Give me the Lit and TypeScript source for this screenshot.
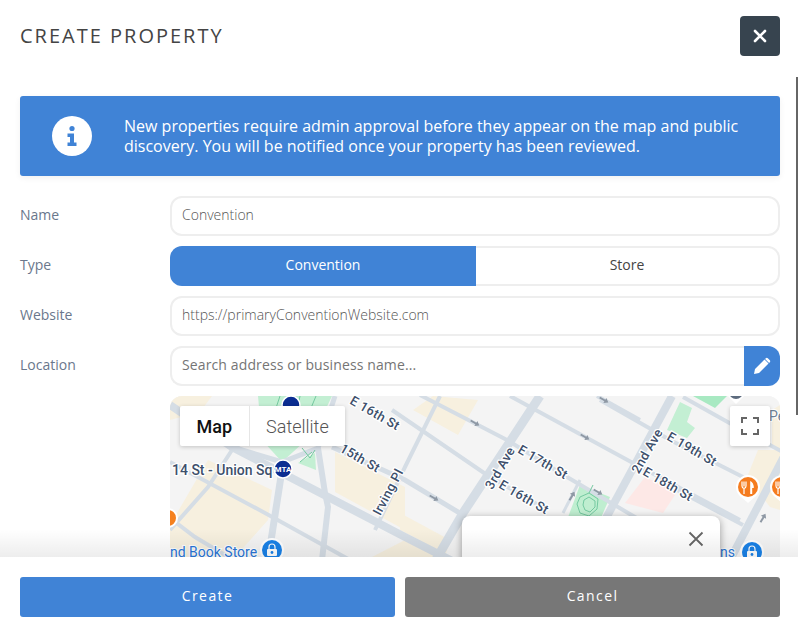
import { LitElement, css, html, svg } from "lit";
import { customElement } from "lit/decorators.js";

const road = "#d5dde5";
const mapText = "#3d4f6b";
const blue = "#4083d6";

// polylines in page coordinates: [points, width]
const roads: [string, number][] = [
  ["170,405 232,447 405,537 470,570", 8],
  ["170,462 265,513 350,560", 4],
  ["170,518 195,537 250,570", 4],
  ["170,530 208,487 232,450", 4],
  ["282,470 268,560", 7],
  ["318,448 325,493 328,507 322,560", 6],
  ["232,447 282,462 318,448 335,396", 5],
  ["332,447 405,480 463,515", 5],
  ["420,395 507,440 567,477 640,520", 4],
  ["392,410 487,475 547,510", 4],
  ["510,396 633,463 740,520", 4],
  ["597,396 640,420", 4],
  ["440,396 405,467 375,530", 4],
  ["540,396 463,513 430,570", 9],
  ["672,396 605,520", 8],
  ["580,480 563,513", 3],
  ["790,445 730,560", 8],
  ["683,397 733,425 790,456", 4],
  ["600,400 670,440 743,477", 4],
  ["677,490 743,525", 4],
];

const beige: string[] = [
  "170,396 212,396 200,412 170,420",
  "208,460 272,490 268,520 235,557 170,557 170,525",
  "335,452 405,487 405,530 335,492",
  "372,557 405,540 450,540 445,557",
  "400,513 450,540 445,553 400,530",
  "413,410 433,396 478,400 458,435",
  "747,477 758,450 780,450 780,510 770,507",
  "772,410 780,405 780,450 772,448",
];

const labels: [string, number, number, number][] = [
  ["E 16th St", 375, 413, 30],
  ["15th St", 360, 458, 30],
  ["Irving Pl", 388, 492, -62],
  ["3rd Ave", 500, 468, -60],
  ["E 17th St", 543, 462, 30],
  ["E 16th St", 524, 497, 30],
  ["2nd Ave", 647, 451, -60],
  ["E 19th St", 692, 449, 30],
  ["E 18th St", 668, 484, 30],
];

const arrows: [number, number, number][] = [
  [475, 423, 30],
  [434, 498, 30],
  [585, 437, 30],
  [604, 400, 30],
  [598, 492, 30],
  [572, 496, -60],
  [763, 518, -60],
];

@customElement("app-root")
export class AppRoot extends LitElement {
  static styles = css`
    :host {
      display: block;
      width: 798px;
      height: 635px;
      overflow: hidden;
      background: #fff;
      font-family: "Open Sans", sans-serif;
    }

    .modal {
      position: relative;
      display: flex;
      flex-direction: column;
      height: 635px;
    }

    .scroller {
      position: relative;
      flex: none;
      height: 557px;
      overflow: hidden;
    }

    .body {
      display: flex;
      flex-direction: column;
      padding: 16px 18px 0 20px;
    }

    .thumb {
      position: absolute;
      right: 0;
      top: 77px;
      width: 2px;
      height: 338px;
      background: #666;
    }

    .fade {
      position: absolute;
      left: 0;
      right: 0;
      bottom: 0;
      height: 28px;
      background: linear-gradient(rgba(0, 0, 0, 0), rgba(0, 0, 0, 0.07));
    }

    .header {
      display: flex;
      justify-content: space-between;
      align-items: center;
      height: 40px;
      margin-bottom: 40px;
    }

    h1 {
      margin: 0;
      padding-bottom: 2px;
      font-size: 20px;
      font-weight: 400;
      letter-spacing: 2px;
      color: #444;
    }

    .close {
      display: flex;
      align-items: center;
      justify-content: center;
      width: 40px;
      height: 40px;
      border: 0;
      padding: 0;
      border-radius: 4px;
      background: #37444f;
    }

    .banner {
      display: flex;
      align-items: center;
      gap: 32px;
      height: 80px;
      margin-bottom: 20px;
      padding-left: 32px;
      box-sizing: border-box;
      border-radius: 3px;
      background: #4083d6;
      color: #fff;
      font-size: 16px;
      line-height: 20px;
      box-shadow: 0 2px 6px rgba(0, 0, 0, 0.06);
    }

    .banner p {
      margin: 0;
      width: 640px;
    }

    .rows {
      display: grid;
      grid-template-columns: 150px 1fr;
      grid-auto-rows: 40px;
      row-gap: 10px;
      align-items: center;
    }

    label {
      padding-bottom: 4px;
      font-size: 14px;
      color: #6a778c;
    }

    .input {
      display: flex;
      align-items: center;
      height: 40px;
      box-sizing: border-box;
      padding: 0 10px 4px;
      border: 2px solid #eee;
      border-radius: 12px;
      font-size: 14px;
      font-weight: 300;
      color: #555;
    }

    .search {
      display: flex;
    }

    .search .input {
      flex: 1;
      border-right: 0;
      border-radius: 12px 0 0 12px;
      font-weight: 400;
      letter-spacing: 0.12px;
      color: #757575;
    }

    .pen {
      display: flex;
      align-items: center;
      justify-content: center;
      width: 36px;
      height: 40px;
      border-radius: 0 12px 12px 0;
      background: #4083d6;
    }

    .segments {
      display: flex;
      height: 40px;
      font-size: 14px;
    }

    .segments div {
      display: flex;
      align-items: center;
      justify-content: center;
      box-sizing: border-box;
      padding-bottom: 4px;
    }

    .on {
      width: 306px;
      background: #4083d6;
      color: #fff;
      border-radius: 12px 0 0 12px;
    }

    .off {
      flex: 1;
      border: 2px solid #eee;
      border-left: 0;
      border-radius: 0 12px 12px 0;
      color: #444;
    }

    .map {
      position: relative;
      grid-column: 2;
      height: 400px;
      align-self: start;
      border-radius: 12px;
      overflow: hidden;
      background: #f4f4f4;
      font-family: Roboto, sans-serif;
    }

    .map svg.tiles {
      display: block;
      width: 610px;
      height: 400px;
    }

    .map-type {
      position: absolute;
      left: 10px;
      top: 10px;
      display: flex;
      height: 40px;
      border-radius: 2px;
      background: #fff;
      font-size: 18px;
      box-shadow: 0 1px 4px rgba(0, 0, 0, 0.2);
    }

    .map-type div {
      display: flex;
      align-items: center;
      padding: 0 16.5px;
      font-weight: 300;
      color: #555;
    }

    .map-type .active {
      font-weight: 500;
      color: #111;
      border-right: 1px solid #e6e6e6;
    }

    .fullscreen {
      position: absolute;
      right: 10px;
      top: 10px;
      display: flex;
      align-items: center;
      justify-content: center;
      width: 40px;
      height: 40px;
      border-radius: 2px;
      background: #fff;
      box-shadow: 0 1px 4px rgba(0, 0, 0, 0.2);
    }

    .popup {
      position: absolute;
      left: 292px;
      top: 120px;
      width: 258px;
      height: 120px;
      border-radius: 8px;
      background: #fff;
      box-shadow: 0 2px 7px 1px rgba(0, 0, 0, 0.3);
    }

    .popup svg {
      position: absolute;
      right: 16px;
      top: 15px;
    }

    .footer {
      display: flex;
      gap: 10px;
      padding: 20px 18px 0 20px;
    }

    .footer button {
      flex: 1;
      height: 40px;
      padding: 0 0 4px;
      border: 0;
      border-radius: 3px;
      color: #fff;
      font-family: "Open Sans", sans-serif;
      font-size: 14px;
      letter-spacing: 1.4px;
    }

    .create {
      background: #4083d6;
    }

    .cancel {
      background: #777;
    }
  `;

  private mapTiles() {
    return svg`
      <g transform="translate(-170 -396)">
        <rect x="170" y="396" width="610" height="400" fill="#f4f4f4" />
        ${beige.map((p) => svg`<polygon points=${p} fill="#f7f0df" />`)}
        <polygon points="258,396 332,396 315,432 282,462 262,440" fill="#c3efd3" />
        <polygon points="298,463 315,453 316,470" fill="#c3efd3" />
        <polygon points="580,485 610,497 600,520 567,520" fill="#bfeed0" />
        <polygon points="693,396 727,396 715,408" fill="#a8e9c2" />
        <polygon points="680,402 692,408 687,422 695,428 687,438 667,430" fill="#c3efd3" />
        <polygon points="645,477 677,492 663,513 625,503" fill="#fde8e6" />
        ${roads.map(
          ([p, w]) =>
            svg`<polyline points=${p} fill="none" stroke=${road} stroke-width=${w} />`
        )}
        <path d="M280 396l-8 24M300 396l-6 30M316 396l-10 24M302 448l8 10 5-8M300 462l12-10M580 497l9-4 9 6-1 10-8 7-9-3-3-9zM584 500l5-3 6 4v6l-5 5-5-2-2-5zM589 493l4-8"
          fill="none" stroke="#74c9a0" stroke-width="1" />
        ${arrows.map(
          ([x, y, r]) => svg`<path transform="translate(${x} ${y}) rotate(${r})"
            d="M-5 -1h6v-2l4 3-4 3v-2h-6z" fill="#8e98a4" />`
        )}
        ${labels.map(
          ([t, x, y, r]) => svg`<text x=${x} y=${y} transform="rotate(${r} ${x} ${y})"
            text-anchor="middle" dominant-baseline="central" font-size="13" font-weight="500"
            letter-spacing="0.3" fill=${mapText} stroke="#fff" stroke-width="2.5"
            paint-order="stroke">${t}</text>`
        )}
        <text x="172" y="475" font-size="14" font-weight="500" fill=${mapText} stroke="#fff"
          stroke-width="2.5" paint-order="stroke">14 St - Union Sq</text>
        <circle cx="283" cy="469" r="9" fill="#0b2d91" stroke="#fff" stroke-width="1.5" />
        <text x="283" y="472" text-anchor="middle" font-size="8" font-weight="700" fill="#fff">MTA</text>
        <circle cx="291" cy="405" r="9" fill="#0b2d91" stroke="#fff" stroke-width="1.5" />
        <path d="M726 394l10 10 10-10-10-8z" fill="#fff" />
        <circle cx="736" cy="392" r="7" fill="#5d6b7e" />
        <text x="769" y="421" font-size="14" fill="#6d8296" stroke="#fff" stroke-width="2"
          paint-order="stroke">Pe</text>
        <text x="170" y="557" font-size="14" fill="#2a76d8" stroke="#fff" stroke-width="2"
          paint-order="stroke">nd Book Store</text>
        ${this.shopPin(272, 550)}
        <text x="720" y="557" font-size="14" fill="#2a76d8" stroke="#fff" stroke-width="2"
          paint-order="stroke">ns</text>
        ${this.shopPin(752, 552)}
        ${this.foodPin(748, 487)}
        ${this.foodPin(782, 487)}
        <circle cx="168" cy="518" r="9" fill="#f5811f" stroke="#fff" stroke-width="2" />
      </g>`;
  }

  private shopPin(cx: number, cy: number) {
    return svg`
      <circle cx=${cx} cy=${cy} r="12" fill="#fff" />
      <circle cx=${cx} cy=${cy} r="10" fill="#1a82e8" />
      <path d="M${cx - 3} ${cy - 1}v-2a3 3 0 0 1 6 0v2" fill="none" stroke="#fff" stroke-width="1.2" />
      <rect x=${cx - 5} y=${cy - 1} width="10" height="7" rx="1" fill="#fff" />
      <circle cx=${cx} cy=${cy + 2.5} r="1.4" fill="#1a82e8" />`;
  }

  private foodPin(cx: number, cy: number) {
    return svg`
      <path d="M${cx - 8} ${cy + 9}l8 7 8-7z" fill="#fff" />
      <circle cx=${cx} cy=${cy} r="12" fill="#fff" />
      <circle cx=${cx} cy=${cy} r="10" fill="#f57c1f" />
      <path d="M${cx - 6} ${cy - 5.5}v4.5q0 2 2 2.5v5.5M${cx - 2} ${cy - 5.5}v4.5q0 2 -2 2.5M${cx - 4} ${cy - 5.5}v5"
        fill="none" stroke="#fff" stroke-width="1.2" />
      <path d="M${cx + 2.2} ${cy + 7}v-13q3.6 1.5 3.6 7h-1.6v6z" fill="#fff" />`;
  }

  render() {
    return html`<div class="modal">
      <div class="scroller">
        <div class="body">
          <div class="header">
            <h1>CREATE PROPERTY</h1>
            <button class="close">
              <svg width="14" height="14" viewBox="0 0 14 14">
                <path d="M2 2l10 10M12 2L2 12" stroke="#fff" stroke-width="2.6" stroke-linecap="round" />
              </svg>
            </button>
          </div>
          <div class="banner">
            <svg width="40" height="40" viewBox="0 0 40 40" style="flex:none">
              <circle cx="20" cy="20" r="20" fill="#fff" />
              <circle cx="20" cy="12.5" r="2.6" fill=${blue} />
              <path d="M15.5 17.5h6.5v9h2.5v3.5h-9v-3.5h2.5v-5.5h-2.5z" fill=${blue} />
            </svg>
            <p>
              New properties require admin approval before they appear on the map and public
              discovery. You will be notified once your property has been reviewed.
            </p>
          </div>
          <div class="rows">
            <label>Name</label>
            <div class="input">Convention</div>
            <label>Type</label>
            <div class="segments">
              <div class="on">Convention</div>
              <div class="off">Store</div>
            </div>
            <label>Website</label>
            <div class="input">https://primaryConventionWebsite.com</div>
            <label>Location</label>
            <div class="search">
              <div class="input">Search address or business name...</div>
              <div class="pen">
                <svg width="18" height="18" viewBox="0 0 18 18">
                  <path d="M1 17l1-5L11.5 2.5l4 4L6 16zM12.8 1.2a1.5 1.5 0 0 1 2 0l2 2a1.5 1.5 0 0 1 0 2l-.7.7-4-4z" fill="#fff" />
                </svg>
              </div>
            </div>
            <div class="map">
              <svg class="tiles" viewBox="0 0 610 400">${this.mapTiles()}</svg>
              <div class="map-type">
                <div class="active">Map</div>
                <div>Satellite</div>
              </div>
              <div class="fullscreen">
                <svg width="18" height="18" viewBox="0 0 18 18" fill="none" stroke="#666" stroke-width="2">
                  <path d="M1 6V1h5M12 1h5v5M17 12v5h-5M6 17H1v-5" />
                </svg>
              </div>
              <div class="popup">
                <svg width="16" height="16" viewBox="0 0 16 16">
                  <path d="M1.5 1.5l13 13M14.5 1.5l-13 13" stroke="#666" stroke-width="1.8" />
                </svg>
              </div>
            </div>
          </div>
        </div>
        <div class="fade"></div>
        <div class="thumb"></div>
      </div>
      <div class="footer">
        <button class="create">Create</button>
        <button class="cancel">Cancel</button>
      </div>
    </div>`;
  }
}
